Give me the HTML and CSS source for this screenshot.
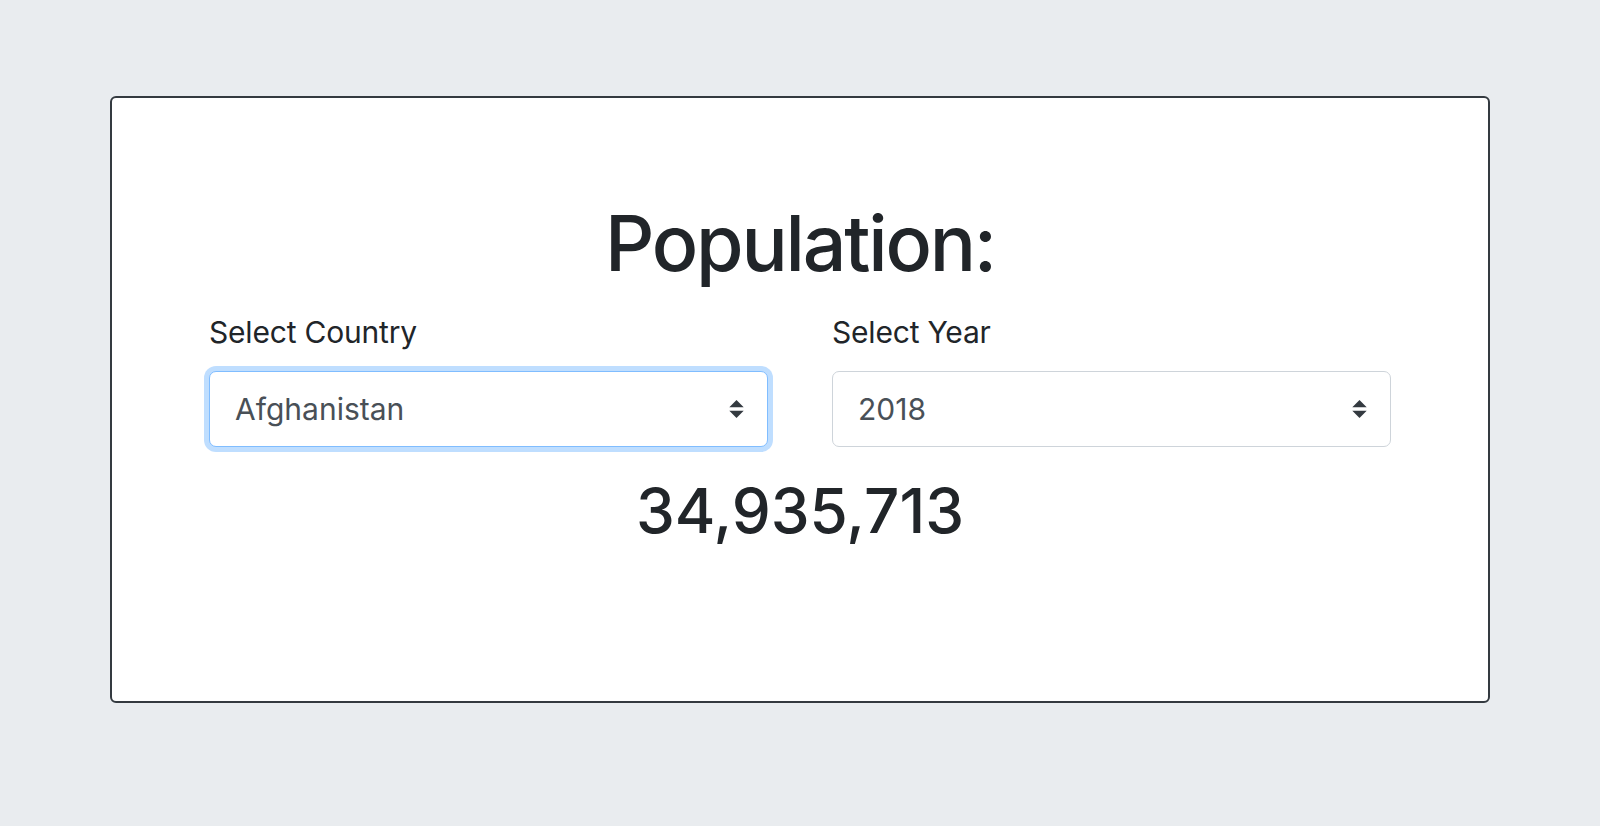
FILE: index.html
```html
<!DOCTYPE html>
<html lang="en">
<head>
<meta charset="utf-8">
<title>Population</title>
<link rel="stylesheet" href="styles.css">
</head>
<body>
<main class="card">
  <h1 class="title">Population:</h1>
  <div class="fields">
    <div class="field">
      <label class="label" for="country">Select Country</label>
      <div class="select-wrap">
        <select id="country" class="select select-focus">
          <option>Afghanistan</option>
        </select>
        <svg class="caret" viewBox="0 0 4 5" aria-hidden="true"><path fill="#343a40" d="M2 0L0 2h4zm0 5L0 3h4z"/></svg>
      </div>
    </div>
    <div class="field">
      <label class="label" for="year">Select Year</label>
      <div class="select-wrap">
        <select id="year" class="select">
          <option>2018</option>
        </select>
        <svg class="caret" viewBox="0 0 4 5" aria-hidden="true"><path fill="#343a40" d="M2 0L0 2h4zm0 5L0 3h4z"/></svg>
      </div>
    </div>
  </div>
  <h2 class="value">34,935,713</h2>
</main>
</body>
</html>
```
FILE: styles.css
```css
html, body {
  margin: 0;
  padding: 0;
}
body {
  background: #e9ecef;
  font-family: Inter, "Liberation Sans", Arial, sans-serif;
  color: #212529;
  padding-top: 96px;
  height: 826px;
  box-sizing: border-box;
}
.card {
  width: 1380px;
  height: 607px;
  margin: 0 auto;
  box-sizing: border-box;
  background: #fff;
  border: 2px solid #343a40;
  border-radius: 6px;
  padding: 99px 97px 0;
  display: flex;
  flex-direction: column;
  align-items: stretch;
}
.title {
  margin: 0;
  font-size: 77px;
  font-weight: 500;
  line-height: 1.2;
  text-align: center;
  letter-spacing: -2.2px;
}
.fields {
  margin-top: 21px;
  display: grid;
  grid-template-columns: 1fr 1fr;
  column-gap: 64px;
}
.field {
  display: flex;
  flex-direction: column;
}
.label {
  font-size: 30px;
  line-height: 1.5;
  font-weight: 400;
  margin-bottom: 16px;
  letter-spacing: -0.2px;
}
.select-wrap {
  position: relative;
}
.select {
  display: block;
  width: 100%;
  height: 76px;
  box-sizing: border-box;
  -webkit-appearance: none;
  appearance: none;
  background: #fff;
  border: 1.5px solid #ced4da;
  border-radius: 7px;
  padding: 0 60px 0 25px;
  font-family: Inter, "Liberation Sans", Arial, sans-serif;
  font-size: 30px;
  color: #495057;
  outline: none;
}
.select-focus {
  border-color: #80bdff;
  box-shadow: 0 0 0 5px rgba(0, 123, 255, 0.25);
}
.caret {
  position: absolute;
  right: 24px;
  top: 50%;
  width: 15px;
  height: 18px;
  margin-top: -9px;
  pointer-events: none;
}
.value {
  margin: 27px 0 0;
  font-size: 62px;
  font-weight: 500;
  line-height: 1.2;
  text-align: center;
}
```
